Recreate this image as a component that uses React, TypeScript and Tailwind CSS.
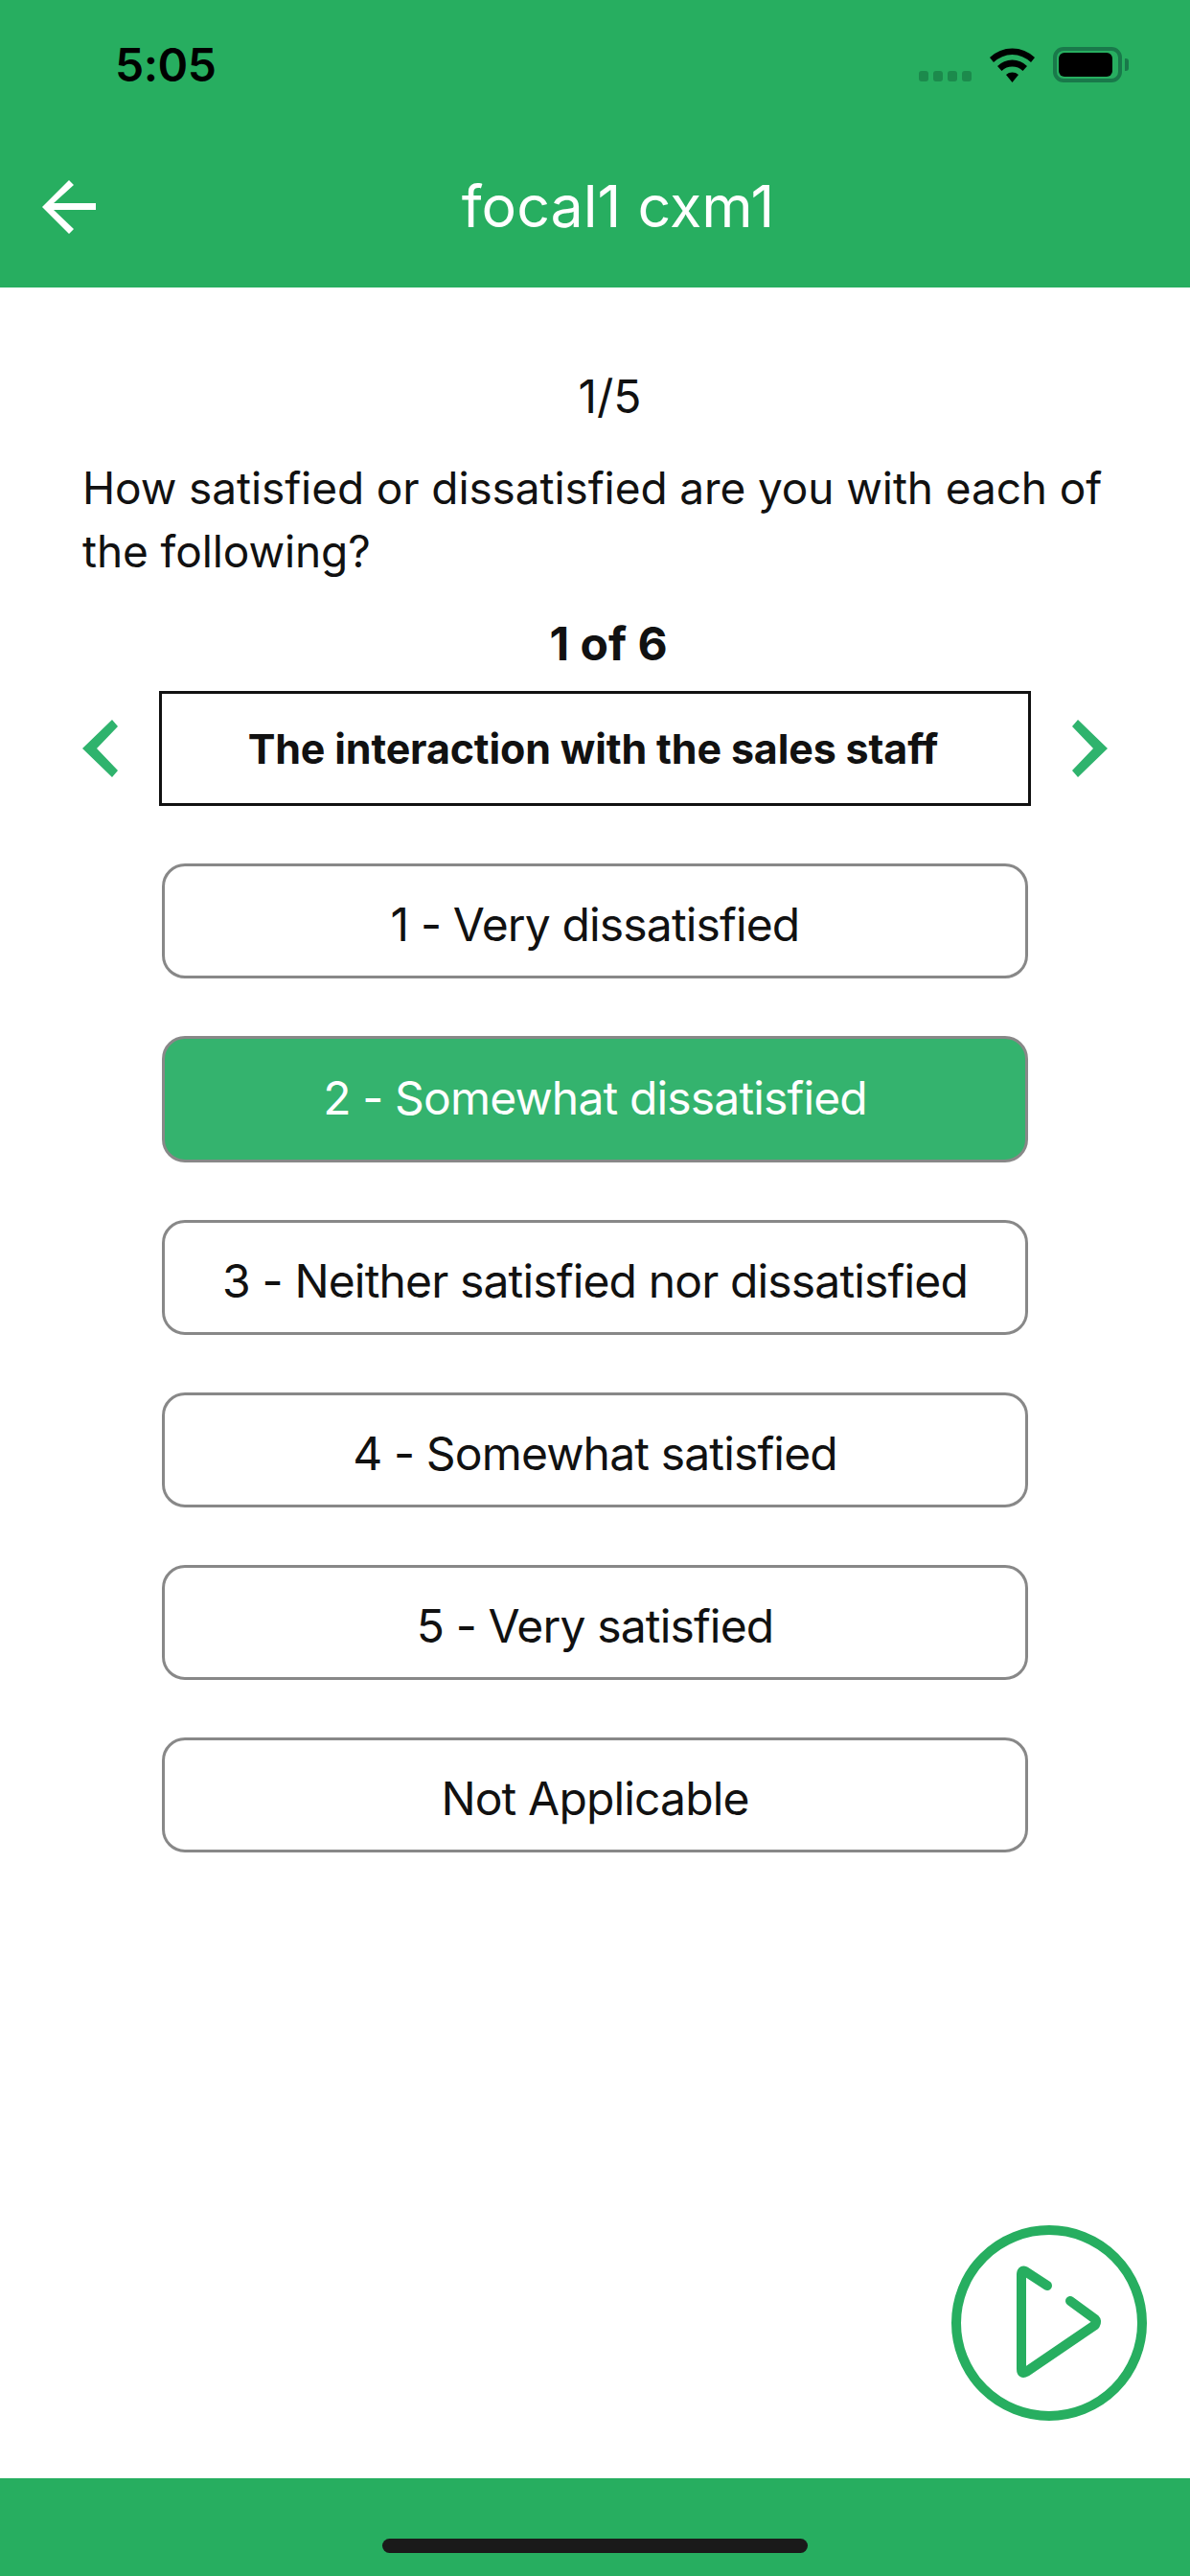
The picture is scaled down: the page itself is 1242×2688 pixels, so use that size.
const options = [
  { label: "1 - Very dissatisfied", selected: false },
  { label: "2 - Somewhat dissatisfied", selected: true },
  { label: "3 - Neither satisfied nor dissatisfied", selected: false },
  { label: "4 - Somewhat satisfied", selected: false },
  { label: "5 - Very satisfied", selected: false },
  { label: "Not Applicable", selected: false },
];

function StatusBar() {
  return (
    <div className="flex h-[136px] items-start justify-between pl-[120px] pr-[64px] pt-[40px]">
      <span className="text-[48px] leading-[56px] font-semibold tracking-[-0.5px] text-black">5:05</span>
      <div className="flex items-end pt-[9px]">
        <div className="mb-[1px] flex gap-[5px]">
          {[0, 1, 2, 3].map((i) => (
            <div key={i} className="h-[11px] w-[10px] rounded-[3px] bg-[#1c8a4c]" />
          ))}
        </div>
        <svg className="ml-[19px]" width="47" height="36" viewBox="0 0 47 36">
          <path d="M0 10 A34 34 0 0 1 47 10 L43 15 A28 28 0 0 0 4 15 Z" fill="#000" />
          <path d="M8 19 A22 22 0 0 1 39 19 L34.500 24 A16 16 0 0 0 12.500 24 Z" fill="#000" />
          <path d="M17 28 A10 10 0 0 1 30 28 L23.500 36 Z" fill="#000" />
        </svg>
        <div className="ml-[19px] flex items-center">
          <div className="flex h-[37px] w-[72px] items-center rounded-[11px] border-[4px] border-[#19794a] pl-[2px]">
            <div className="h-[25px] w-[56px] rounded-[6px] bg-black" />
          </div>
          <div className="ml-[3px] h-[13px] w-[4px] rounded-r-[3px] bg-[#19794a]" />
        </div>
      </div>
    </div>
  );
}

function NavBar() {
  return (
    <div className="relative flex h-[164px] items-start justify-center">
      <svg className="absolute left-[44px] top-[52px]" width="56" height="56" viewBox="0 0 56 56">
        <path d="M0 28 L28 0 L33 5 L12 24 L56 24 L56 31 L12 31 L33 51 L28 56 Z" fill="#fff" />
      </svg>
      <span className="ml-[48px] pt-[43px] text-[61px] leading-[72px] text-white">focal1 cxm1</span>
    </div>
  );
}

function Chevron({ dir }: { dir: "left" | "right" }) {
  return (
    <svg width="37" height="60" viewBox="0 0 37 60" className="shrink-0">
      <path
        d={
          dir === "left"
            ? "M31 0 L37 7 L15 30 L37 53 L31 60 L0 30 Z"
            : "M6 0 L0 7 L22 30 L0 53 L6 60 L37 30 Z"
        }
        fill="#2fb36d"
      />
    </svg>
  );
}

function NextButton() {
  return (
    <svg width="204" height="204" viewBox="0 0 204 204">
      <circle cx="102" cy="102" r="97" fill="none" stroke="#27ae60" strokeWidth="10" />
      <path
        d="M100 63 L77 48 Q73 46 73 52 L73 150 Q73 156 78 153 L150 104 Q152 100 150 98 L124 79"
        fill="none"
        stroke="#27ae60"
        strokeWidth="10"
        strokeLinecap="round"
        strokeLinejoin="round"
      />
    </svg>
  );
}

export default function App() {
  return (
    <div className="flex h-[2688px] w-[1242px] flex-col bg-white font-['Inter',sans-serif] text-[#111]">
      <header className="h-[300px] shrink-0 bg-[#27ae60]">
        <StatusBar />
        <NavBar />
      </header>

      <main className="flex flex-1 flex-col pl-[86px] pr-[58px]">
        <p className="pt-[85px] pl-[3px] text-center text-[48px] leading-[58px]">1/5</p>
        <p className="mt-[33px] text-[46px] leading-[66px] tracking-[-0.1px]">
          How satisfied or dissatisfied are you with each of the following?
        </p>
        <p className="mt-[35px] text-center text-[48px] leading-[58px] font-bold">1 of 6</p>

        <div className="mt-[20px] flex items-center gap-[43px]">
          <Chevron dir="left" />
          <div className="flex h-[120px] w-[910px] shrink-0 items-center justify-center border-[3px] border-[#111] pr-[4px] text-[43px] font-bold tracking-[-0.15px]">
            The interaction with the sales staff
          </div>
          <Chevron dir="right" />
        </div>

        <div className="mt-[60px] ml-[83px] flex w-[904px] flex-col gap-[60px]">
          {options.map((o) => (
            <div
              key={o.label}
              className={
                o.selected
                  ? "flex h-[132px] items-center justify-center rounded-[24px] border-[3px] border-[#888] bg-[#34b36e] pb-[2px] text-[48px] tracking-[-0.85px] text-white"
                  : "flex h-[120px] items-center justify-center rounded-[24px] border-[3px] border-[#888] bg-white pt-[7px] text-[48px] tracking-[-0.85px]"
              }
            >
              {o.label}
            </div>
          ))}
        </div>

        <div className="mt-auto mr-[-13px] mb-[60px] flex justify-end">
          <NextButton />
        </div>
      </main>

      <footer className="flex h-[102px] shrink-0 items-end justify-center bg-[#27ae60] pb-[24px]">
        <div className="h-[15px] w-[444px] rounded-full bg-[#1a1a1a]" />
      </footer>
    </div>
  );
}
